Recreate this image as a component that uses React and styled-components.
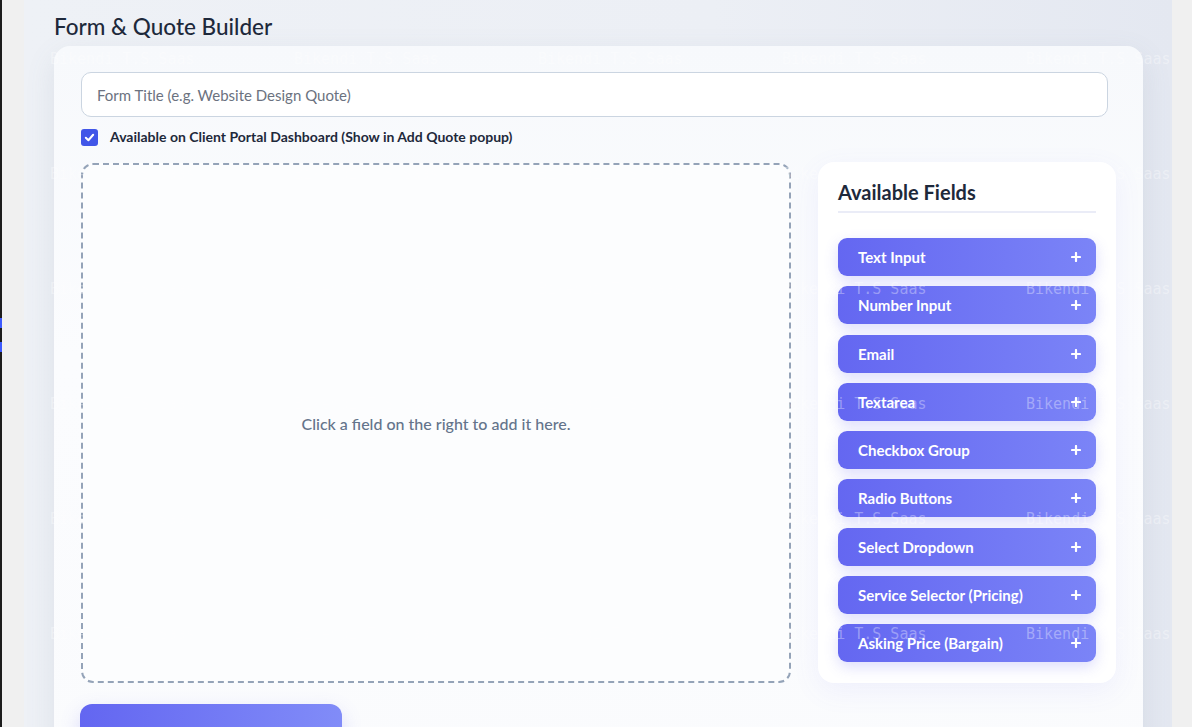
import React from 'react';
import styled, { createGlobalStyle } from 'styled-components';

const GlobalStyle = createGlobalStyle`
  html, body {
    margin: 0;
    padding: 0;
    height: 100%;
    overflow: hidden;
    background: #f0f0f0;
  }
  body {
    font-family: 'Lato', 'Noto Sans', sans-serif;
    color: #1e293b;
  }
  * { box-sizing: border-box; }
`;

const FIELDS = [
  'Text Input',
  'Number Input',
  'Email',
  'Textarea',
  'Checkbox Group',
  'Radio Buttons',
  'Select Dropdown',
  'Service Selector (Pricing)',
  'Asking Price (Bargain)',
];

/* 워터마크 격자 */
const MARK_ROWS = [0, 1, 2, 3, 4, 5];
const MARK_COLS = [0, 1, 2, 3, 4];

function App() {
  return (
    <Shell>
      <GlobalStyle />
      <EdgeStrip>
        <EdgeMarker $top={318} />
        <EdgeMarker $top={342} />
      </EdgeStrip>
      <Gutter />
      <Main>
        <PageTitle>Form &amp; Quote Builder</PageTitle>
        <Card>
          <TitleInput placeholder="Form Title (e.g. Website Design Quote)" />
          <CheckRow>
            <CheckBox>
              <svg width="11" height="11" viewBox="0 0 12 12" fill="none">
                <path d="M2 6.3L4.8 9L10 3" stroke="#fff" strokeWidth="2.2" strokeLinecap="round" strokeLinejoin="round" />
              </svg>
            </CheckBox>
            <CheckLabel>Available on Client Portal Dashboard (Show in Add Quote popup)</CheckLabel>
          </CheckRow>
          <BuilderGrid>
            <DropZone>
              <DropHint>Click a field on the right to add it here.</DropHint>
            </DropZone>
            <FieldPanel>
              <PanelTitle>Available Fields</PanelTitle>
              <FieldList>
                {FIELDS.map((name) => (
                  <FieldButton key={name}>
                    <span>{name}</span>
                    <PlusIcon>
                      <svg width="10" height="10" viewBox="0 0 10 10">
                        <path d="M5 1V9M1 5H9" stroke="#fff" strokeWidth="2.2" strokeLinecap="round" />
                      </svg>
                    </PlusIcon>
                  </FieldButton>
                ))}
              </FieldList>
            </FieldPanel>
          </BuilderGrid>
          <SaveButton>Save Form</SaveButton>
        </Card>
      </Main>
      <Gutter $right />
      <Watermark>
        {MARK_ROWS.map((r) => (
          <MarkRow key={r}>
            {MARK_COLS.map((c) => (
              <MarkText key={c}>Bikendi T.S Saas</MarkText>
            ))}
          </MarkRow>
        ))}
      </Watermark>
    </Shell>
  );
}

const Shell = styled.div`
  position: relative;
  display: flex;
  width: 100vw;
  height: 100vh;
  overflow: hidden;
`;

const EdgeStrip = styled.div`
  width: 2px;
  background: #1c1c1c;
  position: relative;
`;

const EdgeMarker = styled.div`
  position: absolute;
  top: ${(p) => p.$top}px;
  left: 0;
  width: 2px;
  height: 10px;
  background: #3d5afe;
`;

const Gutter = styled.div`
  width: ${(p) => (p.$right ? '20px' : '22px')};
  background: #f0f0f0;
  flex-shrink: 0;
`;

const Main = styled.div`
  flex: 1;
  padding: 14px 29px 0 30px;
  background: linear-gradient(90deg, #eef1f6 0%, #eceff5 60%, #e4e8f1 100%);
`;

const PageTitle = styled.h1`
  margin: 0 0 6px;
  font-size: 22.5px;
  font-weight: 500;
  line-height: 26px;
  color: #1e293b;
`;

const Card = styled.div`
  background: linear-gradient(180deg, #f7f9fc 0%, #fbfcfe 40%, #fafbfd 100%);
  border-radius: 16px;
  padding: 26px 27px 40px;
  box-shadow: 0 10px 30px rgba(100, 116, 139, 0.12);
  height: 780px;
`;

const TitleInput = styled.input`
  display: block;
  width: calc(100% - 8px);
  height: 45px;
  border: 1px solid #cbd5e1;
  border-radius: 10px;
  background: #fff;
  padding: 0 15px;
  font-family: inherit;
  font-size: 15px;
  color: #1e293b;
  outline: none;
  &::placeholder {
    color: #6b7280;
  }
`;

const CheckRow = styled.label`
  display: flex;
  align-items: center;
  gap: 12px;
  margin-top: 11px;
`;

const CheckBox = styled.span`
  width: 17px;
  height: 17px;
  border-radius: 3px;
  background: #4156e8;
  display: flex;
  align-items: center;
  justify-content: center;
`;

const CheckLabel = styled.span`
  font-size: 14px;
  font-weight: 700;
  line-height: 18px;
  color: #1e293b;
`;

const BuilderGrid = styled.div`
  display: grid;
  grid-template-columns: 1fr 298px;
  gap: 27px;
  margin-top: 17px;
  align-items: start;
`;

const DropZone = styled.div`
  height: 520px;
  border: 2px dashed #94a3b8;
  border-radius: 12px;
  background: #fcfdfe;
  display: flex;
  align-items: center;
  justify-content: center;
`;

const DropHint = styled.p`
  margin: 0;
  font-size: 16px;
  font-weight: 500;
  color: #64748b;
`;

const FieldPanel = styled.div`
  margin-top: -1px;
  height: 521px;
  background: #fff;
  border-radius: 16px;
  padding: 18px 20px 20px;
  box-shadow: 0 8px 28px rgba(99, 102, 241, 0.08);
`;

const PanelTitle = styled.h2`
  margin: 0;
  padding-bottom: 7px;
  font-size: 20px;
  font-weight: 700;
  line-height: 24px;
  color: #1e293b;
  border-bottom: 2px solid #eaecf7;
`;

const FieldList = styled.div`
  display: flex;
  flex-direction: column;
  gap: 10.25px;
  margin-top: 25px;
`;

const FieldButton = styled.button`
  display: flex;
  align-items: center;
  justify-content: space-between;
  height: 38px;
  padding: 0 15px 0 20px;
  border: none;
  border-radius: 9px;
  background: linear-gradient(90deg, #6467f1 0%, #7b84f7 100%);
  box-shadow: 0 5px 14px rgba(99, 102, 241, 0.22);
  font-family: inherit;
  font-size: 15px;
  font-weight: 700;
  color: #fff;
  cursor: pointer;
`;

const PlusIcon = styled.span`
  display: flex;
`;

const SaveButton = styled.button`
  display: block;
  margin-top: 21px;
  margin-left: -1px;
  width: 262px;
  height: 66px;
  border: none;
  border-radius: 12px;
  background: linear-gradient(90deg, #6366f1 0%, #818cf8 100%);
  box-shadow: 0 8px 20px rgba(99, 102, 241, 0.22);
  font-family: inherit;
  font-size: 15px;
  font-weight: 700;
  color: #fff;
`;

const Watermark = styled.div`
  position: absolute;
  inset: 0;
  pointer-events: none;
  padding: 50px 0 0 50px;
  display: flex;
  flex-direction: column;
  gap: 97px;
`;

const MarkRow = styled.div`
  display: flex;
  gap: 100px;
  height: 18px;
`;

const MarkText = styled.span`
  flex-shrink: 0;
  width: 144px;
  font-family: 'DejaVu Sans Mono', monospace;
  font-size: 15px;
  line-height: 18px;
  white-space: nowrap;
  color: rgba(255, 255, 255, 0.35);
`;

export default App;
